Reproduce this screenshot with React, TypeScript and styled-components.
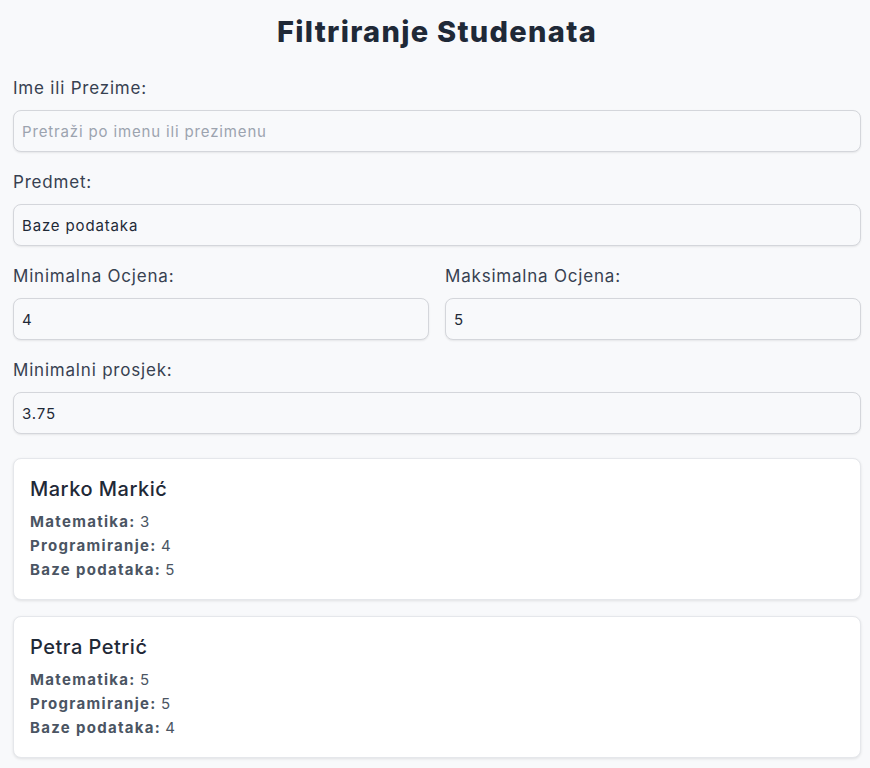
import React from "react";
import styled, { createGlobalStyle } from "styled-components";

const Global = createGlobalStyle`
  html, body { margin: 0; padding: 0; background: #f8f9fb; }
  body { font-family: Inter, "Noto Sans", sans-serif; color: #1f2937; }
  * { box-sizing: border-box; }
`;

const Page = styled.div`
  padding: 14px 9px 20px 13px;
`;

const Title = styled.h1`
  margin: 0 0 27px;
  text-align: center;
  font-size: 29px;
  line-height: 35px;
  font-weight: 800;
  letter-spacing: 1.3px;
  color: #1f2937;
`;

const Field = styled.div`
  display: flex;
  flex-direction: column;
  gap: 9px;
  margin-bottom: 18px;
`;

const Row = styled.div`
  display: grid;
  grid-template-columns: 1fr 1fr;
  gap: 16px;
`;

const Label = styled.label`
  font-size: 17px;
  line-height: 25px;
  letter-spacing: 0.8px;
  color: #374151;
`;

const Input = styled.input`
  height: 42px;
  width: 100%;
  padding: 0 8px;
  border: 1px solid #d4d6db;
  border-radius: 8px;
  background: #f8f9fb;
  box-shadow: 0 1px 2px rgba(0, 0, 0, 0.08);
  font-family: inherit;
  font-size: 15px;
  letter-spacing: 0.85px;
  color: #1f2937;
  outline: none;
  &::placeholder { color: #9ca3af; }
`;

const Cards = styled.div`
  display: flex;
  flex-direction: column;
  gap: 16px;
  margin-top: 24px;
`;

const Card = styled.div`
  background: #ffffff;
  border: 1px solid #e5e7eb;
  border-radius: 8px;
  box-shadow: 0 1px 3px rgba(0, 0, 0, 0.1);
  padding: 18px 17px 17px 16px;
`;

const Name = styled.h2`
  margin: 0 0 9px;
  font-size: 20px;
  line-height: 24px;
  font-weight: 500;
  letter-spacing: 0.5px;
  color: #1f2937;
`;

const Line = styled.div`
  font-size: 15px;
  line-height: 24px;
  color: #4b5563;
  b { font-weight: 700; letter-spacing: 1.3px; }
`;

const students = [
  { name: "Marko Markić", grades: [["Matematika", 3], ["Programiranje", 4], ["Baze podataka", 5]] },
  { name: "Petra Petrić", grades: [["Matematika", 5], ["Programiranje", 5], ["Baze podataka", 4]] },
];

export default function App() {
  return (
    <>
      <Global />
      <Page>
        <Title>Filtriranje Studenata</Title>
        <Field>
          <Label>Ime ili Prezime:</Label>
          <Input placeholder="Pretraži po imenu ili prezimenu" />
        </Field>
        <Field>
          <Label>Predmet:</Label>
          <Input defaultValue="Baze podataka" />
        </Field>
        <Row>
          <Field>
            <Label>Minimalna Ocjena:</Label>
            <Input defaultValue="4" />
          </Field>
          <Field>
            <Label>Maksimalna Ocjena:</Label>
            <Input defaultValue="5" />
          </Field>
        </Row>
        <Field>
          <Label>Minimalni prosjek:</Label>
          <Input defaultValue="3.75" />
        </Field>
        <Cards>
          {students.map((s) => (
            <Card key={s.name}>
              <Name>{s.name}</Name>
              {s.grades.map(([subj, g]) => (
                <Line key={subj as string}>
                  <b>{subj}:</b> {g}
                </Line>
              ))}
            </Card>
          ))}
        </Cards>
      </Page>
    </>
  );
}
